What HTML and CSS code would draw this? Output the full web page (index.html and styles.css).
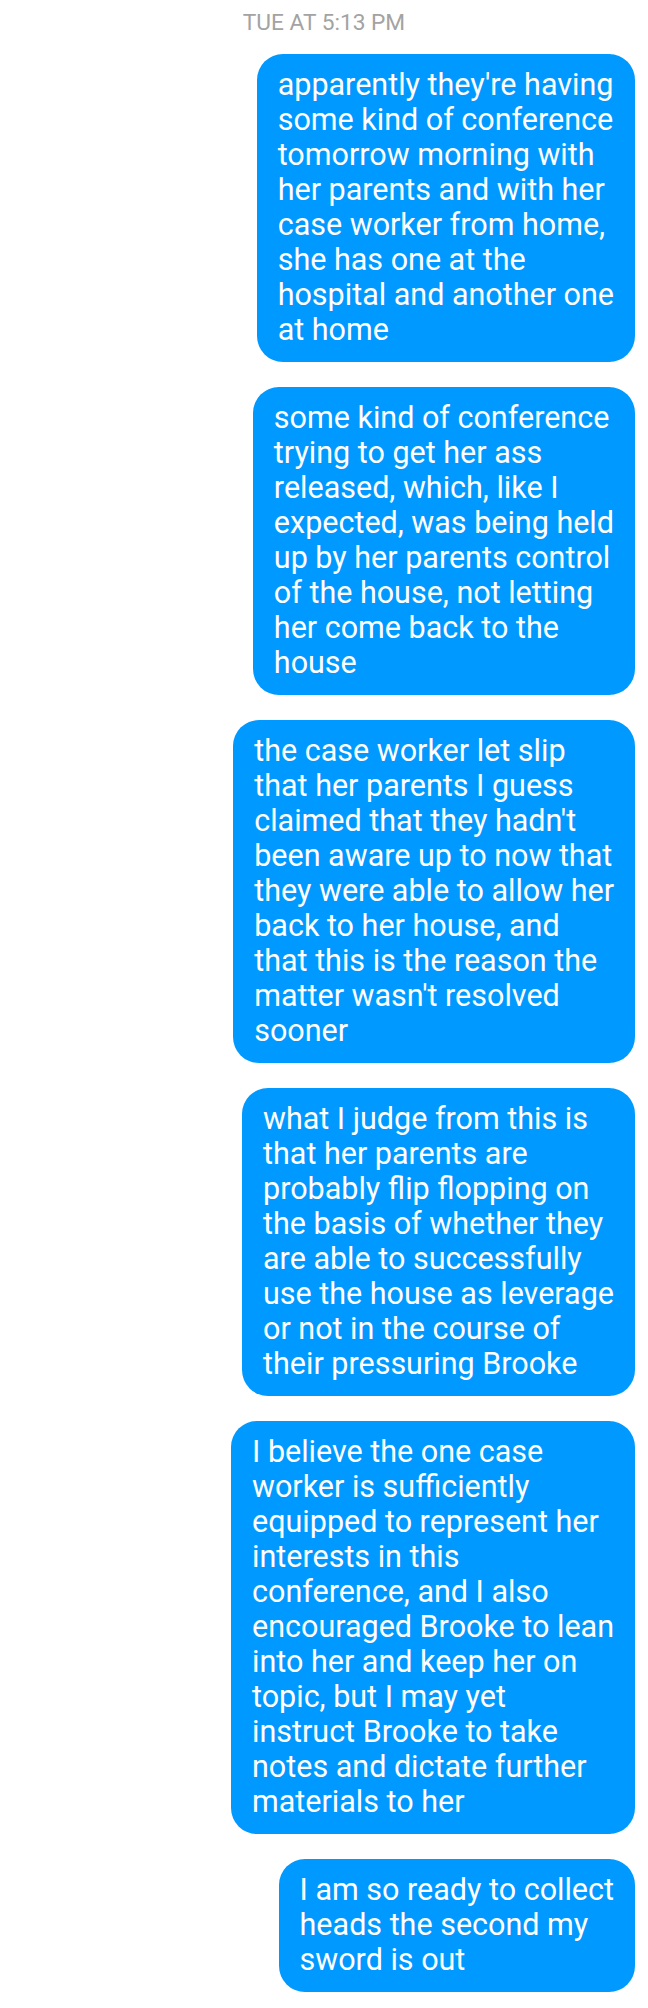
FILE: index.html
```html
<!DOCTYPE html>
<html lang="en">
<head>
<meta charset="utf-8">
<title>Messages</title>
<link rel="stylesheet" href="styles.css">
</head>
<body>
<main class="thread">
  <div class="stamp">TUE AT 5:13 PM</div>
  <div class="msg"><p class="bubble">apparently they're having<br>some kind of conference<br>tomorrow morning with<br>her parents and with her<br>case worker from home,<br>she has one at the<br>hospital and another one<br>at home</p></div>
  <div class="msg"><p class="bubble">some kind of conference<br>trying to get her ass<br>released, which, like I<br>expected, was being held<br>up by her parents control<br>of the house, not letting<br>her come back to the<br>house</p></div>
  <div class="msg"><p class="bubble">the case worker let slip<br>that her parents I guess<br>claimed that they hadn't<br>been aware up to now that<br>they were able to allow her<br>back to her house, and<br>that this is the reason the<br>matter wasn't resolved<br>sooner</p></div>
  <div class="msg"><p class="bubble">what I judge from this is<br>that her parents are<br>probably flip flopping on<br>the basis of whether they<br>are able to successfully<br>use the house as leverage<br>or not in the course of<br>their pressuring Brooke</p></div>
  <div class="msg"><p class="bubble">I believe the one case<br>worker is sufficiently<br>equipped to represent her<br>interests in this<br>conference, and I also<br>encouraged Brooke to lean<br>into her and keep her on<br>topic, but I may yet<br>instruct Brooke to take<br>notes and dictate further<br>materials to her</p></div>
  <div class="msg"><p class="bubble">I am so ready to collect<br>heads the second my<br>sword is out</p></div>
</main>
</body>
</html>
```
FILE: styles.css
```css
html, body {
  margin: 0;
  padding: 0;
  background: #ffffff;
}
body {
  width: 648px;
  font-family: Roboto, "Noto Sans", sans-serif;
}
.thread {
  display: flex;
  flex-direction: column;
  gap: 25px;
  padding: 10px 13px 16px 13px;
}
.stamp {
  text-align: center;
  color: #a3a3a3;
  font-size: 22.7px;
  line-height: 26px;
  margin-bottom: -7px;
}
.msg {
  display: flex;
  justify-content: flex-end;
}
.bubble {
  margin: 0;
  background: #0099ff;
  color: #ffffff;
  font-size: 30.5px;
  line-height: 35px;
  padding: 13px 21px 15px 21px;
  border-radius: 26px;
  white-space: nowrap;
}
```
